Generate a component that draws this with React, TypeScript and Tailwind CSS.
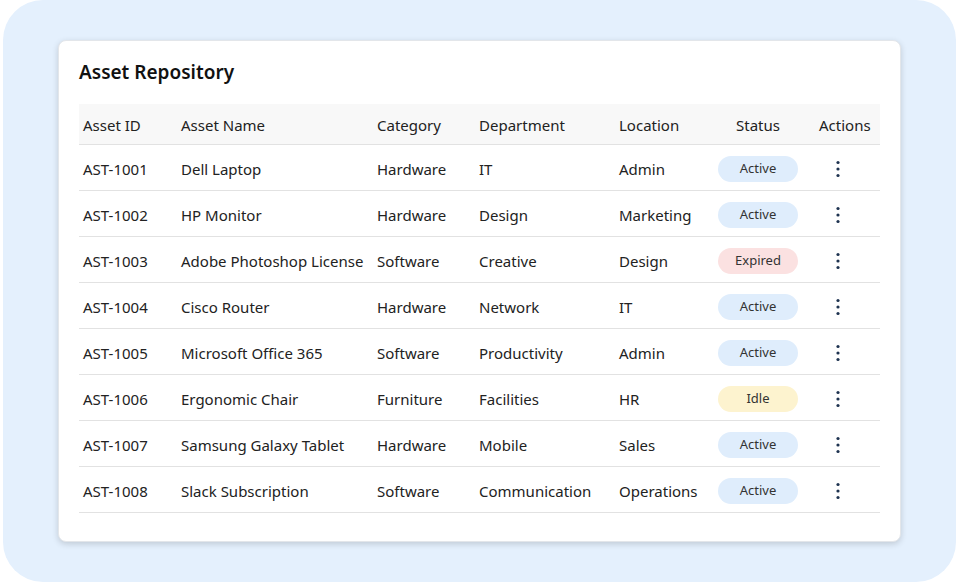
import React from "react";

const rows = [
  ["AST-1001", "Dell Laptop", "Hardware", "IT", "Admin", "Active"],
  ["AST-1002", "HP Monitor", "Hardware", "Design", "Marketing", "Active"],
  ["AST-1003", "Adobe Photoshop License", "Software", "Creative", "Design", "Expired"],
  ["AST-1004", "Cisco Router", "Hardware", "Network", "IT", "Active"],
  ["AST-1005", "Microsoft Office 365", "Software", "Productivity", "Admin", "Active"],
  ["AST-1006", "Ergonomic Chair", "Furniture", "Facilities", "HR", "Idle"],
  ["AST-1007", "Samsung Galaxy Tablet", "Hardware", "Mobile", "Sales", "Active"],
  ["AST-1008", "Slack Subscription", "Software", "Communication", "Operations", "Active"],
];

const badge: Record<string, string> = {
  Active: "bg-[#dfedfc]",
  Expired: "bg-[#fbe1e1]",
  Idle: "bg-[#fdf3cf]",
};

export default function App() {
  return (
    <div className="w-[959px] h-[588px] bg-white" style={{ fontFamily: '"Noto Sans", sans-serif' }}>
      <div className="mx-[3px] h-[582px] rounded-[40px] bg-[#e4f0fd] pt-[40px] px-[55px]">
        <div className="bg-white rounded-[8px] border border-[#e3e6ea] shadow-[0_2px_6px_rgba(0,0,0,0.16)] px-[20px] pt-[18px] pb-[30px] h-[502px]">
          <h1 className="text-[19px] font-semibold text-[#111] leading-[26px] mb-[19px]">Asset Repository</h1>
          <table className="w-full table-fixed border-collapse text-[15px] text-[#222]">
            <colgroup>
              <col className="w-[98px]" />
              <col className="w-[196px]" />
              <col className="w-[102px]" />
              <col className="w-[140px]" />
              <col className="w-[96px]" />
              <col className="w-[94px]" />
              <col />
            </colgroup>
            <thead>
              <tr className="bg-[#f8f8f8] h-[40px] border-b border-[#e2e2e2]">
                <th className="font-normal text-left pl-[4px] pt-[2px]">Asset ID</th>
                <th className="font-normal text-left pl-[4px] pt-[2px]">Asset Name</th>
                <th className="font-normal text-left pl-[4px] pt-[2px]">Category</th>
                <th className="font-normal text-left pl-[4px] pt-[2px]">Department</th>
                <th className="font-normal text-left pl-[4px] pt-[2px]">Location</th>
                <th className="font-normal text-center pt-[2px]">Status</th>
                <th className="font-normal text-left pl-[14px] pt-[2px]">Actions</th>
              </tr>
            </thead>
            <tbody>
              {rows.map((r) => (
                <tr key={r[0]} className="h-[46px] border-b border-[#e2e2e2]">
                  {r.slice(0, 5).map((c, i) => (
                    <td key={i} className="pl-[4px] pt-[4px] whitespace-nowrap">{c}</td>
                  ))}
                  <td className="text-center pt-[4px]">
                    <span className={`inline-flex items-center justify-center w-[80px] h-[26px] rounded-full text-[13px] text-[#333] ${badge[r[5]]}`}>{r[5]}</span>
                  </td>
                  <td className="pl-[30px] pt-[4px]">
                    <svg width="6" height="18" viewBox="0 0 6 18" className="block">
                      <circle cx="3" cy="2.5" r="1.6" fill="#1e3350" />
                      <circle cx="3" cy="9" r="1.6" fill="#1e3350" />
                      <circle cx="3" cy="15.5" r="1.6" fill="#1e3350" />
                    </svg>
                  </td>
                </tr>
              ))}
            </tbody>
          </table>
        </div>
      </div>
    </div>
  );
}
